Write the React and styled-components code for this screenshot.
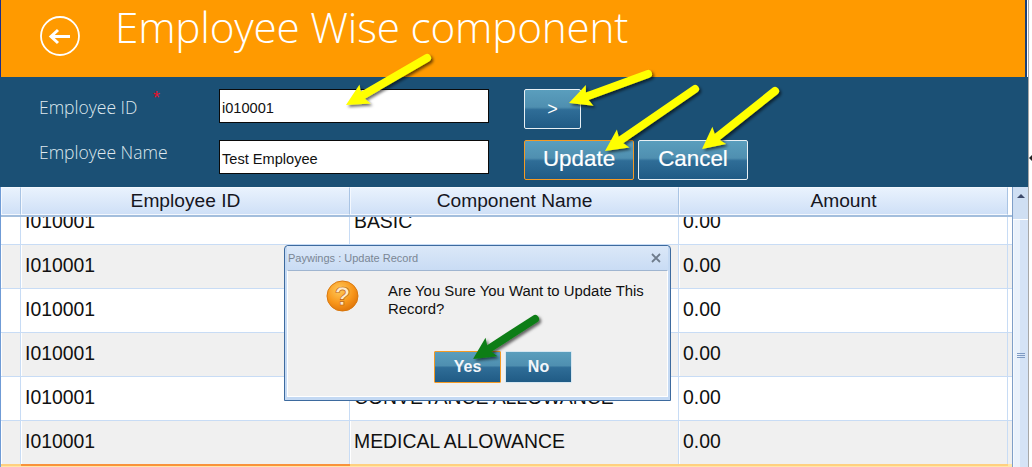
import React from "react";
import styled, { createGlobalStyle } from "styled-components";

const Global = createGlobalStyle`
  html, body { margin: 0; padding: 0; width: 1032px; height: 467px; overflow: hidden; background: #fff; }
  * { box-sizing: border-box; }
`;

const Page = styled.div`
  position: relative;
  width: 1032px;
  height: 467px;
  overflow: hidden;
  font-family: "Liberation Sans", Arial, sans-serif;
  display: flex;
  background: #fff;
`;
const Main = styled.div`
  width: 1028px;
  height: 467px;
  display: flex;
  flex-direction: column;
`;
const Edge = styled.div`
  width: 4px;
  height: 467px;
  border-left: 1px solid #a8a8a8;
  position: relative;
`;
const EdgeMark = styled.span`
  position: absolute;
  left: 0;
  top: 155px;
  width: 0;
  height: 0;
  border-top: 3px solid transparent;
  border-bottom: 3px solid transparent;
  border-right: 3px solid #222;
`;
const Header = styled.header`
  height: 77px;
  flex: none;
  margin-right: 1px;
  background: #ff9a00;
  border-left: 1px solid #1b2f8a;
  border-right: 2px solid #1a3f78;
  display: flex;
  align-items: flex-start;
  color: #fff;
`;
const BackButton = styled.span`
  width: 40px;
  height: 40px;
  margin: 16px 0 0 39px;
  flex: none;
  display: block;
`;
const Title = styled.h1`
  margin: 0 0 0 35px;
  font: 300 42.3px/54px "Open Sans", sans-serif;
  white-space: nowrap;
  letter-spacing: -0.2px;
`;
const Form = styled.section`
  height: 110px;
  flex: none;
  background: #1b5075;
  display: grid;
  grid-template-columns: 180px 270px 35px 114px 114px;
  grid-template-rows: 51px 47px;
  padding: 12px 0 0 39px;
  align-items: start;
`;
const Label = styled.label`
  font: 300 17.5px/20px "Open Sans", sans-serif;
  color: #dfe8ee;
  position: relative;
  display: block;
  margin-top: ${p => p.$top}px;
`;
const Star = styled.span`
  position: absolute;
  left: 114px;
  top: -9px;
  color: #e8102a;
  font: 18px/20px "Liberation Sans", sans-serif;
`;
const Field = styled.div`
  width: 270px;
  height: 34px;
  background: #fff;
  border: 1px solid #0a0a0a;
  color: #111;
  font-size: 14.6px;
  line-height: 36px;
  padding-left: 2px;
`;
const Btn = styled.button`
  padding: 0;
  font-family: "Liberation Sans", Arial, sans-serif;
  font-weight: 400;
  color: #fff;
  border-radius: 2px;
  border: 1px solid ${p => (p.$active ? "#f59a23" : "#e8f0f4")};
  background: linear-gradient(to bottom, #5a9ebd 0%, #4f8fb0 45%, #2f6d97 52%, #205b85 100%);
`;
const GoBtn = styled(Btn)`
  width: 57px;
  height: 40px;
  font-size: 18px;
`;
const ActionBtn = styled(Btn)`
  width: 110px;
  height: 40px;
  font-size: 22.4px;
  line-height: 36px;
  padding-bottom: 2px;
  -webkit-text-stroke: 0.2px #fff;
`;
const Grid = styled.div`
  flex: 1;
  display: flex;
  min-height: 0;
  border-left: 1px solid #6f9bd6;
`;
const GridMain = styled.div`
  width: 1011px;
  display: flex;
  flex-direction: column;
  overflow: hidden;
`;
const Cols = "20px 329px 329px 329px";
const HeadRow = styled.div`
  height: 30px;
  flex: none;
  display: grid;
  grid-template-columns: ${Cols};
  border-bottom: 2px solid #a3bedd;
  position: relative;
  z-index: 1;
`;
const HeadCell = styled.div`
  background: linear-gradient(to bottom, #e9f2fd, #cfe0f7);
  border: 1px solid #f4f8fe;
  border-right: 1px solid #a9c4e4;
  font-size: 19.2px;
  line-height: 26px;
  text-align: center;
  color: #16161e;
`;
const Rows = styled.div`
  margin-top: -16px;
`;
const Row = styled.div`
  height: 44px;
  display: grid;
  grid-template-columns: ${Cols};
  border-bottom: 1px solid #c8dcf5;
  background: ${p => (p.$alt ? "#f0f0f0" : "#fff")};
`;
const Cell = styled.div`
  border-right: 1px solid #c8dcf5;
  border-left: 1px solid #fff;
  font-size: 19.4px;
  line-height: 40px;
  padding-left: 3px;
  color: #111;
  white-space: nowrap;
`;
const SelectedRow = styled.div`
  height: 10px;
  display: grid;
  grid-template-columns: ${Cols};
  background: #ffe7a8;
  margin-top: -1px;
`;
const SelectedCell = styled.div`
  border-top: 2px solid #f9923b;
`;
const SelectedLead = styled.div`
  border-top: 2px solid #ffd080;
`;
const Scrollbar = styled.div`
  width: 16px;
  border-left: 1px solid #7f9fc8;
  display: flex;
  flex-direction: column;
  background: #e6effb;
`;
const ScrollUp = styled.div`
  height: 33px;
  flex: none;
  background: #cfdff3;
  display: flex;
  justify-content: center;
  padding-top: 7px;
  border-bottom: 1px solid #fff;
`;
const UpGlyph = styled.span`
  width: 0;
  height: 0;
  border-left: 4px solid transparent;
  border-right: 4px solid transparent;
  border-bottom: 4px solid #3d4a6b;
`;
const Thumb = styled.div`
  flex: 1;
  background: linear-gradient(to right, #eaf2fc 0 40%, #d5e3f6 40% 100%);
  border-left: 1px solid #f5f9fe;
  padding-top: 133px;
  display: flex;
  flex-direction: column;
  align-items: center;
  gap: 1px;
`;
const Grip = styled.span`
  width: 8px;
  height: 1px;
  background: #7f9bc4;
`;
const Dialog = styled.div`
  position: absolute;
  left: 284px;
  top: 245px;
  width: 387px;
  height: 156px;
  background: #c4d9f3;
  border: 1px solid #3d6a9e;
  border-radius: 4px 4px 0 0;
  display: flex;
  flex-direction: column;
  padding: 0 2px 3px 2px;
`;
const DialogBar = styled.div`
  height: 24px;
  flex: none;
  display: flex;
  align-items: center;
  justify-content: space-between;
  padding: 0 7px 0 1px;
  background: linear-gradient(to bottom, #dbe8f8, #c9dcf4);
  color: #7a8694;
  font-size: 11px;
`;
const DialogBody = styled.div`
  flex: 1;
  background: #f0f0f0;
  border: 1px solid #fff;
  border-top-color: #9fb5d0;
  display: flex;
  flex-direction: column;
  padding: 10px 0 0 38px;
`;
const Message = styled.div`
  display: flex;
  height: 70px;
`;
const MsgIcon = styled.span`
  width: 33px;
  height: 32px;
  flex: none;
  margin-top: -1px;
`;
const MsgText = styled.p`
  margin: 2px 0 0 29px;
  font-size: 14.9px;
  line-height: 17.5px;
  color: #111;
  width: 275px;
`;
const DialogActions = styled.div`
  display: flex;
  gap: 4px;
  margin: 0 0 0 108px;
`;
const DialogBtn = styled(Btn)`
  width: 67px;
  height: 32px;
  font-size: 16px;
  font-weight: 700;
  border-radius: 1px;
  border-color: ${p => (p.$active ? "#f59a23" : "#d6e6f0")};
  color: #f2f6fa;
`;
const Overlay = styled.svg`
  position: absolute;
  inset: 0;
  pointer-events: none;
`;

const arrows = [
  { a: [427, 58], b: [346, 105], c: "#ffff00" },
  { a: [648, 74], b: [569, 103], c: "#ffff00" },
  { a: [695, 89], b: [605, 151], c: "#ffff00" },
  { a: [775, 91], b: [702, 149], c: "#ffff00" },
  { a: [535, 319], b: [473, 359], c: "#0f7d16" },
];

function Arrow({ a, b, c }) {
  const dx = b[0] - a[0];
  const dy = b[1] - a[1];
  const len = Math.hypot(dx, dy);
  const ux = dx / len;
  const uy = dy / len;
  const h = 22;
  const w = 11;
  const bx = b[0] - ux * h;
  const by = b[1] - uy * h;
  const nx = b[0] - ux * (h - 4);
  const ny = b[1] - uy * (h - 4);
  const pts = `${b[0]},${b[1]} ${bx - uy * w},${by + ux * w} ${nx},${ny} ${bx + uy * w},${by - ux * w}`;
  return (
    <g filter="url(#shadow)">
      <line x1={a[0]} y1={a[1]} x2={nx} y2={ny} stroke={c} strokeWidth="8" strokeLinecap="round" />
      <polygon points={pts} fill={c} />
    </g>
  );
}

const data = [
  ["BASIC", "0.00", false],
  ["", "0.00", true],
  ["", "0.00", false],
  ["", "0.00", true],
  ["CONVEYANCE ALLOWANCE", "0.00", false],
  ["MEDICAL ALLOWANCE", "0.00", true],
];

export default function App() {
  return (
    <Page>
      <Global />
      <Main>
        <Header>
          <BackButton>
            <svg width="40" height="40" viewBox="0 0 40 40" fill="none">
              <circle cx="20" cy="20" r="19" stroke="#fff" strokeWidth="1.8" />
              <path d="M30 20.5H12M18 14L11 20.5L18 27" stroke="#fff" strokeWidth="3" />
            </svg>
          </BackButton>
          <Title>Employee Wise component</Title>
        </Header>
        <Form>
          <Label $top={8}>
            Employee ID<Star>*</Star>
          </Label>
          <Field>i010001</Field>
          <span />
          <GoBtn>&gt;</GoBtn>
          <span />
          <Label $top={2}>Employee Name</Label>
          <Field>Test Employee</Field>
          <span />
          <ActionBtn $active>Update</ActionBtn>
          <ActionBtn>Cancel</ActionBtn>
        </Form>
        <Grid>
          <GridMain>
            <HeadRow>
              <HeadCell />
              <HeadCell>Employee ID</HeadCell>
              <HeadCell>Component Name</HeadCell>
              <HeadCell>Amount</HeadCell>
            </HeadRow>
            <Rows>
              {data.map(([name, amount, alt], i) => (
                <Row key={i} $alt={alt}>
                  <Cell />
                  <Cell>I010001</Cell>
                  <Cell>{name}</Cell>
                  <Cell>{amount}</Cell>
                </Row>
              ))}
              <SelectedRow>
                <SelectedLead />
                <SelectedCell />
                <SelectedLead />
                <SelectedLead />
              </SelectedRow>
            </Rows>
          </GridMain>
          <Scrollbar>
            <ScrollUp>
              <UpGlyph />
            </ScrollUp>
            <Thumb>
              <Grip />
              <Grip />
              <Grip />
            </Thumb>
          </Scrollbar>
        </Grid>
      </Main>
      <Edge>
        <EdgeMark />
      </Edge>
      <Dialog>
        <DialogBar>
          <span>Paywings : Update Record</span>
          <svg width="10" height="10" viewBox="0 0 10 10">
            <path d="M1 1L9 9M9 1L1 9" stroke="#6f7c8c" strokeWidth="1.8" />
          </svg>
        </DialogBar>
        <DialogBody>
          <Message>
            <MsgIcon>
              <svg width="33" height="32" viewBox="0 0 34 33">
                <defs>
                  <radialGradient id="q" cx="40%" cy="30%" r="75%">
                    <stop offset="0" stopColor="#ffc95a" />
                    <stop offset="0.6" stopColor="#f8961a" />
                    <stop offset="1" stopColor="#dd7208" />
                  </radialGradient>
                </defs>
                <ellipse cx="17" cy="16.5" rx="16" ry="15.5" fill="url(#q)" stroke="#d8780e" />
                <text x="17" y="26" textAnchor="middle" fontFamily="Liberation Sans" fontWeight="700" fontSize="27" fill="#ffeccb" stroke="#b9600a" strokeWidth="0.7">?</text>
              </svg>
            </MsgIcon>
            <MsgText>Are You Sure You Want to Update This Record?</MsgText>
          </Message>
          <DialogActions>
            <DialogBtn $active>Yes</DialogBtn>
            <DialogBtn>No</DialogBtn>
          </DialogActions>
        </DialogBody>
      </Dialog>
      <Overlay width="1032" height="467" viewBox="0 0 1032 467">
        <defs>
          <filter id="shadow" x="-30%" y="-30%" width="160%" height="160%">
            <feDropShadow dx="2" dy="2" stdDeviation="1.5" floodColor="#000" floodOpacity="0.6" />
          </filter>
        </defs>
        {arrows.map((ar, i) => (
          <Arrow key={i} {...ar} />
        ))}
      </Overlay>
    </Page>
  );
}
